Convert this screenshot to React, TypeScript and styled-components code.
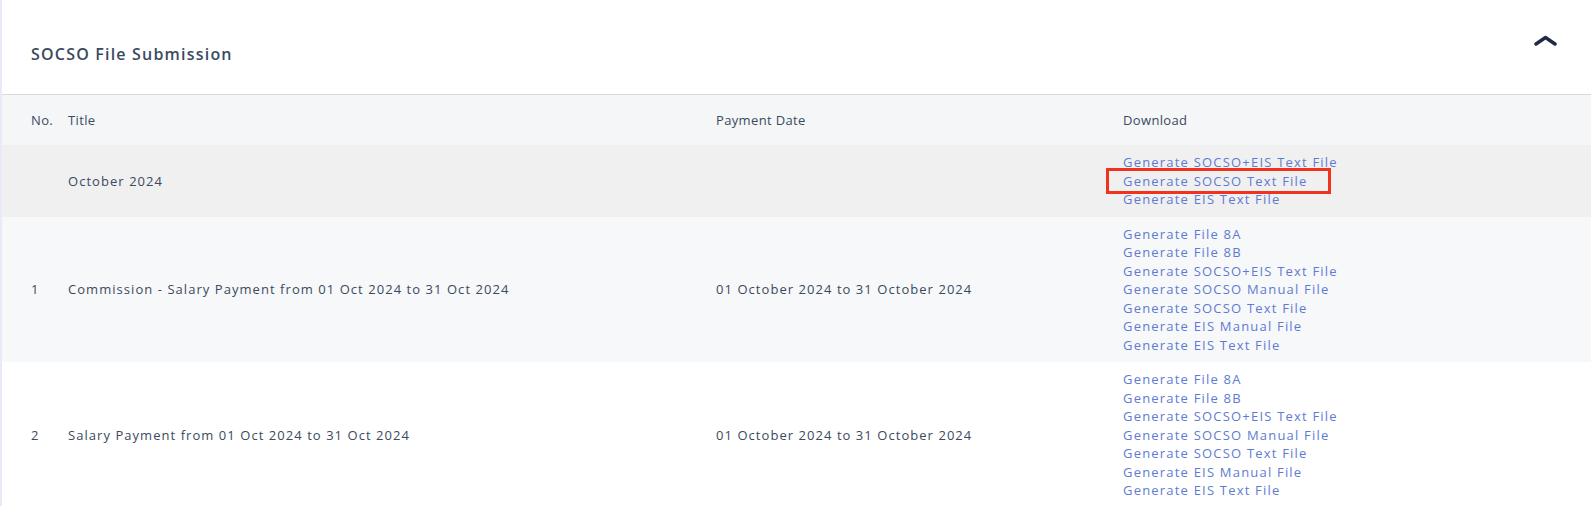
import React from 'react';
import styled, { createGlobalStyle } from 'styled-components';

const GlobalStyle = createGlobalStyle`
  body {
    margin: 0;
    background: #fff;
    font-family: 'Open Sans', 'Liberation Sans', sans-serif;
  }
`;

const Card = styled.div`
  background: #fff;
  border-left: 2px solid #e6ebf5;
  min-height: 506px;
`;

const CardHeader = styled.div`
  height: 80px;
  display: flex;
  align-items: center;
  justify-content: space-between;
  padding: 14px 34px 0 29px;
  border-bottom: 1px solid #d9dadf;
`;

const CardTitle = styled.h2`
  margin: 0;
  font-size: 16px;
  font-weight: 600;
  letter-spacing: 1.2px;
  color: #3b4a5e;
`;

const Toggle = styled.button`
  border: 0;
  background: none;
  padding: 0;
  margin-top: -28px;
  cursor: pointer;
  display: flex;
`;

const Row = styled.div<{ $bg: string; $head?: boolean }>`
  display: grid;
  grid-template-columns: 37px 648px 407px 1fr;
  align-items: center;
  padding: 0 0 0 29px;
  background: ${(p) => p.$bg};
  min-height: ${(p) => (p.$head ? '50px' : 'auto')};
  font-size: 13px;
  letter-spacing: ${(p) => (p.$head ? '0.35px' : '1.05px')};
  color: #3b4a5e;
`;

const Cell = styled.div``;

const Links = styled.div`
  display: flex;
  flex-direction: column;
  padding: 8px 0;
`;

const LinkItem = styled.a<{ $marked?: boolean }>`
  line-height: 18.5px;
  letter-spacing: 1.2px;
  color: #5e7bd3;
  text-decoration: none;
  width: fit-content;
  cursor: pointer;
  ${(p) =>
    p.$marked &&
    `
    outline: 3px solid #f0331f;
    margin-left: -14px;
    padding: 1px 20px 1px 14px;
    margin-top: -1px;
    margin-bottom: -1px;
  `}
`;

const fullLinks = [
  'Generate File 8A',
  'Generate File 8B',
  'Generate SOCSO+EIS Text File',
  'Generate SOCSO Manual File',
  'Generate SOCSO Text File',
  'Generate EIS Manual File',
  'Generate EIS Text File',
];

const payments = [
  {
    no: '1',
    title: 'Commission - Salary Payment from 01 Oct 2024 to 31 Oct 2024',
    date: '01 October 2024 to 31 October 2024',
    bg: '#f7f8f9',
  },
  {
    no: '2',
    title: 'Salary Payment from 01 Oct 2024 to 31 Oct 2024',
    date: '01 October 2024 to 31 October 2024',
    bg: '#ffffff',
  },
];

const App: React.FC = () => {
  return (
    <Card>
      <GlobalStyle />
      <CardHeader>
        <CardTitle>SOCSO File Submission</CardTitle>
        <Toggle aria-label="collapse">
          <svg width="23" height="11" viewBox="0 0 23 11" fill="none">
            <path d="M2 9 L11.5 2.5 L21 9" stroke="#1f2a44" strokeWidth="3.4" strokeLinecap="round" strokeLinejoin="round" />
          </svg>
        </Toggle>
      </CardHeader>

      <Row $bg="#f5f6f8" $head>
        <Cell>No.</Cell>
        <Cell>Title</Cell>
        <Cell>Payment Date</Cell>
        <Cell>Download</Cell>
      </Row>

      <Row $bg="#f0f0f0">
        <Cell />
        <Cell>October 2024</Cell>
        <Cell />
        <Links>
          <LinkItem>Generate SOCSO+EIS Text File</LinkItem>
          <LinkItem $marked>Generate SOCSO Text File</LinkItem>
          <LinkItem>Generate EIS Text File</LinkItem>
        </Links>
      </Row>

      {payments.map((p) => (
        <Row key={p.no} $bg={p.bg}>
          <Cell>{p.no}</Cell>
          <Cell>{p.title}</Cell>
          <Cell>{p.date}</Cell>
          <Links>
            {fullLinks.map((l) => (
              <LinkItem key={l}>{l}</LinkItem>
            ))}
          </Links>
        </Row>
      ))}
    </Card>
  );
};

export default App;
